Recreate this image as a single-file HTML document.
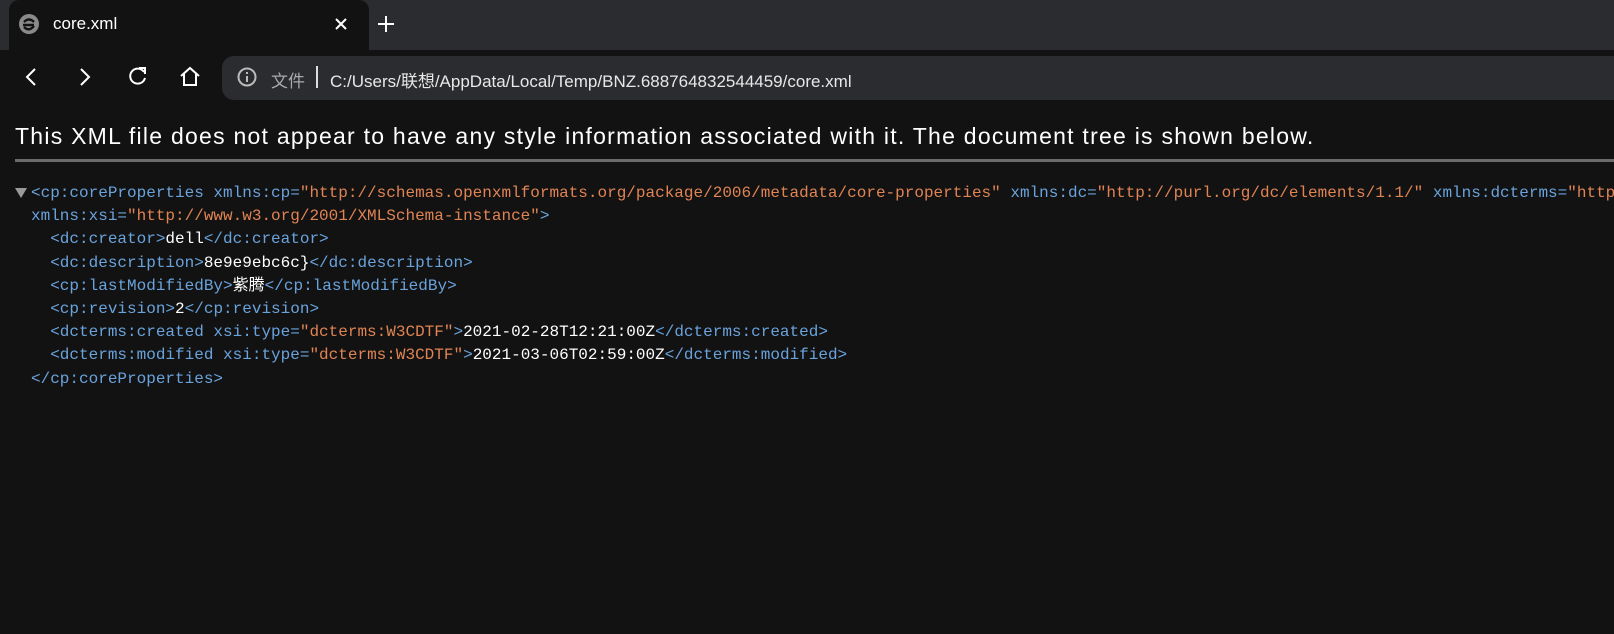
<!DOCTYPE html>
<html><head><meta charset="utf-8"><style>
*{margin:0;padding:0;box-sizing:border-box}
html,body{overflow:hidden}
body{width:1614px;height:634px;background:#121212;font-family:"Liberation Sans","Noto Sans CJK SC",sans-serif;position:relative}
.strip{position:absolute;left:0;top:0;width:1614px;height:50px;background:#2b2c2f}
.tab{position:absolute;left:9px;top:0;width:360px;height:50px;background:#121212;border-radius:10px 10px 0 0}
.tab .t{position:absolute;left:44px;top:14px;color:#fff;font-size:17px}
.addr{position:absolute;left:222px;top:56px;width:1392px;height:44px;background:#2b2c2f;border-radius:12px 0 0 12px}
.url{position:absolute;left:330px;top:67px;color:#e8e8e8;font-size:17px}
.file{position:absolute;left:271px;top:67px;color:#aaa;font-size:17px}
.sep{position:absolute;left:316px;top:66px;width:2px;height:22px;background:#ddd}
h1{position:absolute;left:15px;top:123px;font-size:23px;letter-spacing:1.25px;font-weight:normal;color:#fff;white-space:nowrap}
.hr{position:absolute;left:15px;top:159px;width:1599px;height:3px;background:#6b6b6b}
pre{position:absolute;left:31px;top:182px;width:1583px;overflow:hidden;font-family:"Liberation Mono","Noto Sans CJK SC",monospace;font-size:16px;line-height:23.2px;color:#fff;white-space:pre}
.b{color:#6aa3dc}.o{color:#e08454}
.tri{position:absolute;left:15px;top:188px;width:0;height:0;border-left:6px solid transparent;border-right:6px solid transparent;border-top:10px solid #9a9a9a}
</style></head><body>
<div class="strip"></div>
<div class="tab">
<svg style="position:absolute;left:9px;top:13px" width="22" height="22" viewBox="0 0 22 22"><circle cx="11" cy="11" r="10" fill="#8a8a8a"/><path d="M5 12h11M6 9q5-5 10 0M6 14q5 5 10-1" stroke="#121212" stroke-width="2.4" fill="none"/></svg>
<span class="t">core.xml</span>
<svg style="position:absolute;left:325px;top:17px" width="14" height="14"><path d="M2 2L12 12M12 2L2 12" stroke="#fff" stroke-width="2"/></svg>
</div>
<svg style="position:absolute;left:376px;top:14px" width="20" height="20"><path d="M10 2V18M2 10H18" stroke="#fff" stroke-width="2"/></svg>
<svg style="position:absolute;left:22px;top:66px" width="20" height="22"><path d="M13 3L5 11L13 19" stroke="#fff" stroke-width="2" fill="none"/></svg>
<svg style="position:absolute;left:76px;top:66px" width="20" height="22"><path d="M5 3L13 11L5 19" stroke="#fff" stroke-width="2" fill="none"/></svg>
<svg style="position:absolute;left:127px;top:65px" width="22" height="22"><path d="M17 7A7.5 7.5 0 1 0 18 13" stroke="#fff" stroke-width="2" fill="none"/><path d="M12 3H18V9" stroke="#fff" stroke-width="2" fill="none"/></svg>
<svg style="position:absolute;left:178px;top:65px" width="24" height="24"><path d="M3 11L12 3L21 11M6 9V20H18V9" stroke="#fff" stroke-width="2" fill="none"/></svg>
<div class="addr"></div>
<svg style="position:absolute;left:236px;top:66px" width="22" height="22"><circle cx="11" cy="11" r="8.5" stroke="#bbb" stroke-width="2" fill="none"/><path d="M11 10V16M11 6V8" stroke="#bbb" stroke-width="2"/></svg>
<span class="file">文件</span><div class="sep"></div>
<span class="url">C:/Users/联想/AppData/Local/Temp/BNZ.688764832544459/core.xml</span>
<h1>This XML file does not appear to have any style information associated with it. The document tree is shown below.</h1>
<div class="hr"></div>
<div class="tri"></div>
<pre><span class="b">&lt;cp:coreProperties xmlns:cp=</span><span class="o">"http://schemas.openxmlformats.org/package/2006/metadata/core-properties"</span><span class="b"> xmlns:dc=</span><span class="o">"http://purl.org/dc/elements/1.1/"</span><span class="b"> xmlns:dcterms=</span><span class="o">"http://purl.org/dc/terms/"</span>
<span class="b">xmlns:xsi=</span><span class="o">"http://www.w3.org/2001/XMLSchema-instance"</span><span class="b">&gt;</span>
<span class="b">  &lt;dc:creator&gt;</span>dell<span class="b">&lt;/dc:creator&gt;</span>
<span class="b">  &lt;dc:description&gt;</span>8e9e9ebc6c}<span class="b">&lt;/dc:description&gt;</span>
<span class="b">  &lt;cp:lastModifiedBy&gt;</span>紫腾<span class="b">&lt;/cp:lastModifiedBy&gt;</span>
<span class="b">  &lt;cp:revision&gt;</span>2<span class="b">&lt;/cp:revision&gt;</span>
<span class="b">  &lt;dcterms:created xsi:type=</span><span class="o">"dcterms:W3CDTF"</span><span class="b">&gt;</span>2021-02-28T12:21:00Z<span class="b">&lt;/dcterms:created&gt;</span>
<span class="b">  &lt;dcterms:modified xsi:type=</span><span class="o">"dcterms:W3CDTF"</span><span class="b">&gt;</span>2021-03-06T02:59:00Z<span class="b">&lt;/dcterms:modified&gt;</span>
<span class="b">&lt;/cp:coreProperties&gt;</span></pre>
</body></html>
